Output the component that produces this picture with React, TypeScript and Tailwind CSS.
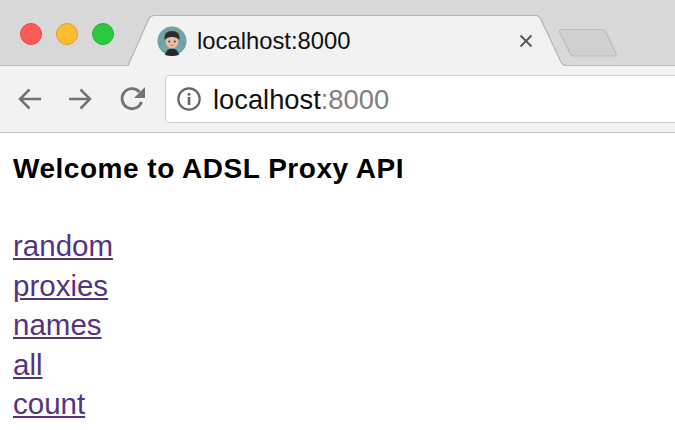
const LINKS = ['random', 'proxies', 'names', 'all', 'count'];

function Avatar() {
  return (
    <svg width="30" height="30" viewBox="0 0 30 30" className="shrink-0">
      <circle cx="15" cy="15" r="14.5" fill="#6fa5a6" />
      <path d="M8 29 Q9 23 15 22.5 Q21 23 22 29 Q15 31 8 29Z" fill="#26282b" />
      <ellipse cx="15" cy="15" rx="6.5" ry="7.5" fill="#e8bfa6" />
      <path d="M7.5 14 Q6.5 5 15 5 Q23.5 5 22.5 14 Q19 10.5 15 11 Q11 10.5 7.5 14Z" fill="#2a2c2f" />
      <circle cx="12.2" cy="15.5" r="0.9" fill="#333" />
      <circle cx="17.8" cy="15.5" r="0.9" fill="#333" />
      <path d="M13.5 19 Q15 20 16.5 19" stroke="#b5635a" strokeWidth="0.8" fill="none" />
    </svg>
  );
}

function TabStrip() {
  return (
    <div className="h-[66px] bg-[#d8d8d8] border-b border-[#bdbdbd] flex items-start shrink-0">
      <div className="flex gap-[14px] pl-5 pt-[23px] w-[128px] shrink-0">
        <span className="w-[22px] h-[22px] rounded-full bg-[#fc5c57] border border-[#e3483f]" />
        <span className="w-[22px] h-[22px] rounded-full bg-[#fdbc2f] border border-[#e0a028]" />
        <span className="w-[22px] h-[22px] rounded-full bg-[#2ac940] border border-[#24ad34]" />
      </div>

      {/* tab shape sits behind its own content */}
      <div className="relative w-[438px] h-[51px] mt-[15px] shrink-0 flex items-center pl-[29px] pr-[33px]">
        <svg width="438" height="51" viewBox="0 0 438 51" className="absolute left-0 top-0">
          <path d="M0 51 L21 3.5 Q22.5 0.5 26 0.5 L408 0.5 Q411 0.5 412.5 3.5 L433 47 Q435 50.5 438 50.5 L438 51Z" fill="#f2f2f2" />
          <path d="M0 50.5 L21 3.5 Q22.5 0.5 26 0.5 L408 0.5 Q411 0.5 412.5 3.5 L433 47 Q435 50.5 438 50.5" fill="none" stroke="#b4b4b4" strokeWidth="1.2" />
        </svg>
        <div className="relative flex items-center w-full">
          <Avatar />
          <span className="ml-[10px] text-[23.8px] leading-none text-[#111] font-['Liberation_Sans',sans-serif]">localhost:8000</span>
          <svg width="14" height="14" viewBox="0 0 14 14" className="ml-auto">
            <path d="M1.5 1.5 L12.5 12.5 M12.5 1.5 L1.5 12.5" stroke="#555" strokeWidth="1.8" />
          </svg>
        </div>
      </div>

      <svg width="60" height="30" viewBox="0 0 60 30" className="mt-[28px] -ml-[8px] shrink-0">
        <path d="M1.5 4 Q0.8 1.5 3.5 1.5 L44 1.5 Q46.5 1.5 47.5 3.5 L58 25 Q59 28 56 28 L16 28 Q13.5 28 12.5 26Z" fill="#d0d0d0" stroke="#bcbcbc" strokeWidth="1.2" />
      </svg>
    </div>
  );
}

function Toolbar() {
  return (
    <div className="h-[67px] bg-[#f2f2f2] border-b border-[#c4c4c4] flex items-center pl-[17px] shrink-0">
      <svg width="26" height="24" viewBox="0 0 26 24" className="shrink-0">
        <path d="M24 12 H3 M12.5 2.5 L3 12 L12.5 21.5" fill="none" stroke="#737373" strokeWidth="2.5" />
      </svg>
      <svg width="26" height="24" viewBox="0 0 26 24" className="ml-[24px] shrink-0">
        <path d="M2 12 H23 M13.5 2.5 L23 12 L13.5 21.5" fill="none" stroke="#737373" strokeWidth="2.5" />
      </svg>
      <svg width="28" height="26" viewBox="0 0 28 26" className="ml-[25px] shrink-0">
        <path d="M23.5 16 A10 10 0 1 1 21.5 6" fill="none" stroke="#737373" strokeWidth="2.8" />
        <path d="M27 1 V12 H16Z" fill="#737373" />
      </svg>
      <div className="ml-[19px] flex-1 h-[48px] -mr-2 bg-white border border-[#cfcfcf] rounded-[4px] flex items-center pl-[10px]">
        <svg width="26" height="26" viewBox="0 0 26 26" className="shrink-0">
          <circle cx="13" cy="13" r="10.7" fill="none" stroke="#666" strokeWidth="2.2" />
          <circle cx="13" cy="8.2" r="1.5" fill="#666" />
          <rect x="11.7" y="11" width="2.6" height="8" fill="#666" />
        </svg>
        <span className="ml-[11px] pt-[2px] text-[27.3px] leading-none text-[#111] font-['Liberation_Sans',sans-serif]">
          localhost<span className="text-[#808080]">:8000</span>
        </span>
      </div>
    </div>
  );
}

export default function App() {
  return (
    <div className="w-[675px] h-[430px] overflow-hidden bg-white flex flex-col font-['Liberation_Sans',sans-serif]">
      <TabStrip />
      <Toolbar />
      <div className="pl-[13px] pt-[20px]">
        <h1 className="text-[28px] leading-[32px] tracking-[0.52px] font-bold text-black">Welcome to ADSL Proxy API</h1>
        <ul className="mt-[41px]">
          {LINKS.map(name => (
            <li key={name} className="text-[29.5px] leading-[39.5px]">
              <a href="#" className="text-[#55347f] underline decoration-2 underline-offset-[2px]">{name}</a>
            </li>
          ))}
        </ul>
      </div>
    </div>
  );
}
